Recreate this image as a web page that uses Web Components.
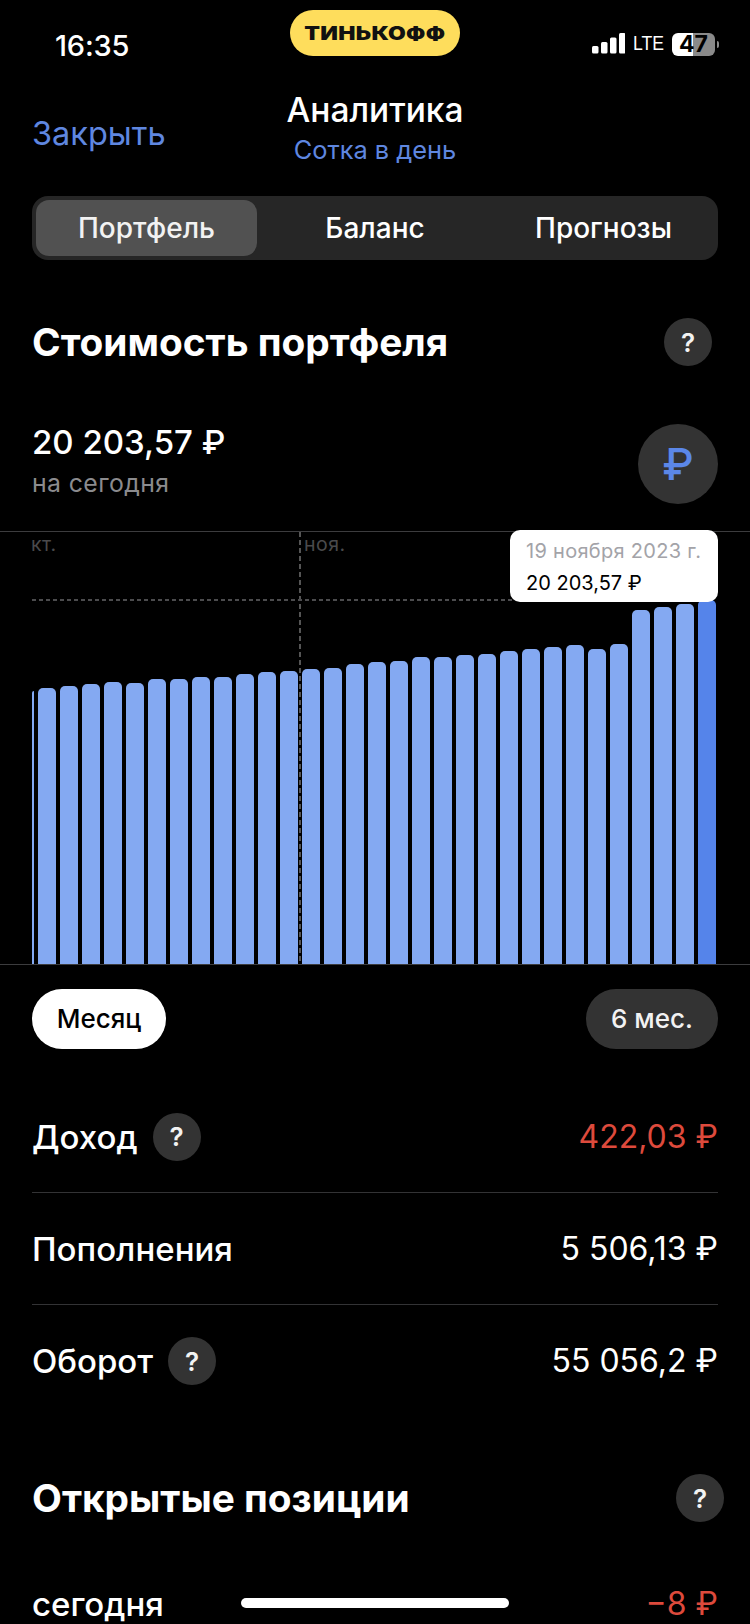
<!DOCTYPE html>
<html lang="ru">
<head>
<meta charset="utf-8">
<title>Аналитика</title>
<style>
  html, body { margin: 0; background: #000; }
  body { width: 750px; height: 1624px; overflow: hidden; position: relative; color: #fff; font-family: Inter, "Noto Sans", sans-serif; }
</style>
</head>
<body>
  <status-bar></status-bar>
  <nav-header></nav-header>
  <segment-tabs></segment-tabs>
  <section-title style="--top: 58px">Стоимость портфеля</section-title>
  <value-summary></value-summary>
  <bar-chart></bar-chart>
  <period-switch></period-switch>
  <stat-list>
    <stat-row label="Доход" value="422,03 ₽" help tone="red"></stat-row>
    <stat-row label="Пополнения" value="5 506,13 ₽"></stat-row>
    <stat-row label="Оборот" value="55 056,2 ₽" help></stat-row>
  </stat-list>
  <section-title style="--top: 57px; --right: 26px">Открытые позиции</section-title>
  <stat-row class="last" label="сегодня" value="−8 ₽" tone="red" plain></stat-row>
  <home-bar></home-bar>

<script>
class HelpDot extends HTMLElement {
  constructor() {
    super();
    this.attachShadow({mode: 'open'});
    this.shadowRoot.innerHTML = `
      <style>
        :host {
          display: flex;
          flex: none;
          width: 48px;
          height: 48px;
          border-radius: 50%;
          background: #333333;
          color: #f2f2f2;
          align-items: center;
          justify-content: center;
          font: 600 26px Inter, sans-serif;
        }
      </style>
      ?
    `;
  }
}
customElements.define('help-dot', HelpDot);

class StatusBar extends HTMLElement {
  constructor() {
    super();
    this.attachShadow({mode: 'open'});
    this.shadowRoot.innerHTML = `
      <style>
        :host {
          display: grid;
          grid-template-columns: 235px 170px 1fr;
          height: 76px;
          padding: 10px 31px 0 55px;
          box-sizing: border-box;
          width: 750px;
        }
        .time {
          font: 500 29px/1 Inter, sans-serif;
          padding-top: 21px;
          letter-spacing: -0.2px;
        }
        .pill {
          height: 46px;
          border-radius: 23px;
          background: #fedd5c;
          color: #111;
          display: flex;
          align-items: center;
          justify-content: center;
          font: 900 18.5px/1 Inter, sans-serif;
        }
        .pill span { display: inline-block; transform: scaleX(1.24); letter-spacing: 0.2px; }
        .right {
          display: flex;
          justify-content: flex-end;
          align-items: flex-start;
          padding-top: 23px;
        }
        svg { display: block; }
        .lte {
          font: 500 20px/21px "Liberation Sans", sans-serif;
          margin-left: 8px;
          width: 39px;
          transform: scaleX(0.88);
          transform-origin: left center;
        }
        .battery {
          position: relative;
          width: 43px;
          height: 23px;
          border-radius: 6px;
          background: linear-gradient(90deg, #fff 0 21px, #8a8a8a 21px);
          color: #000;
          font: 700 23px/23px Inter, sans-serif;
          text-align: center;
        }
        .nub { width: 2px; height: 7px; margin: 8px 0 0 2px; background: #8a8a8a; border-radius: 0 2px 2px 0; }
      </style>
      <div class="time">16:35</div>
      <div class="pill"><span>ТИНЬКОФФ</span></div>
      <div class="right">
        <svg width="33" height="21" viewBox="0 0 33 21" fill="#fff">
          <rect x="0" y="13" width="6.5" height="7.5" rx="1.5"/>
          <rect x="9" y="9" width="6.5" height="11.5" rx="1.5"/>
          <rect x="18" y="4.5" width="6.5" height="16" rx="1.5"/>
          <rect x="27" y="0" width="6.5" height="20.5" rx="1.5"/>
        </svg>
        <div class="lte">LTE</div>
        <div class="battery">47</div>
        <div class="nub"></div>
      </div>
    `;
  }
}
customElements.define('status-bar', StatusBar);

class NavHeader extends HTMLElement {
  constructor() {
    super();
    this.attachShadow({mode: 'open'});
    this.shadowRoot.innerHTML = `
      <style>
        :host {
          display: grid;
          grid-template-columns: 1fr auto 1fr;
          height: 120px;
          padding: 13px 32px 0;
          box-sizing: border-box;
        }
        .close { font: 400 32.5px/40px Inter, sans-serif; color: #5f87e0; padding-top: 25px; }
        .center { text-align: center; }
        .title { font: 500 33.5px/42px Inter, sans-serif; color: #fff; }
        .sub { font: 400 25.4px/34px Inter, sans-serif; color: #5f87e0; margin-top: 2px; }
      </style>
      <div class="close">Закрыть</div>
      <div class="center">
        <div class="title">Аналитика</div>
        <div class="sub">Сотка в день</div>
      </div>
      <div></div>
    `;
  }
}
customElements.define('nav-header', NavHeader);

class SegmentTabs extends HTMLElement {
  constructor() {
    super();
    this.attachShadow({mode: 'open'});
    this.shadowRoot.innerHTML = `
      <style>
        :host {
          display: grid;
          grid-template-columns: 221px 236px 1fr;
          margin: 0 32px;
          height: 64px;
          padding: 4px;
          box-sizing: border-box;
          border-radius: 16px;
          background: #262626;
          font: 500 28px/56px Inter, sans-serif;
          text-align: center;
        }
        .on { background: #515151; border-radius: 13px; color: #f2f2f2; }
      </style>
      <div class="on">Портфель</div>
      <div>Баланс</div>
      <div>Прогнозы</div>
    `;
  }
}
customElements.define('segment-tabs', SegmentTabs);

class SectionTitle extends HTMLElement {
  constructor() {
    super();
    this.attachShadow({mode: 'open'});
    this.shadowRoot.innerHTML = `
      <style>
        :host {
          display: flex;
          align-items: center;
          justify-content: space-between;
          margin-top: var(--top, 60px);
          height: 48px;
          padding: 0 var(--right, 38px) 0 32px;
          font: 700 38.8px/48px Inter, sans-serif;
        }
      </style>
      <slot></slot>
      <help-dot></help-dot>
    `;
  }
}
customElements.define('section-title', SectionTitle);

class ValueSummary extends HTMLElement {
  constructor() {
    super();
    this.attachShadow({mode: 'open'});
    this.shadowRoot.innerHTML = `
      <style>
        :host {
          display: flex;
          align-items: flex-start;
          justify-content: space-between;
          height: 80px;
          margin-top: 58px;
          padding: 0 32px;
        }
        .text { margin-top: -2px; }
        .amount { font: 500 33px/40px Inter, sans-serif; }
        .note { font: 400 24.8px/32px Inter, sans-serif; color: #8b8b8e; margin-top: 5px; letter-spacing: 0.4px; }
        .cur {
          width: 80px;
          height: 80px;
          border-radius: 50%;
          background: #333333;
          color: #5b87e8;
          display: flex;
          align-items: center;
          justify-content: center;
          font: 500 44px/1 Inter, sans-serif;
        }
      </style>
      <div class="text">
        <div class="amount">20 203,57 ₽</div>
        <div class="note">на сегодня</div>
      </div>
      <div class="cur">₽</div>
    `;
  }
}
customElements.define('value-summary', ValueSummary);

// tops of the columns read off the screenshot, baseline is y=964
const BAR_TOPS = [688,686,684,682,683,679,679,677,677,674,672,671,669,668,664,662,661,657,657,655,654,651,649,647,645,649,644,610,607,604,600];

class BarChart extends HTMLElement {
  constructor() {
    super();
    this.attachShadow({mode: 'open'});
    const bars = BAR_TOPS.map((top, i) =>
      `<div class="bar${i === BAR_TOPS.length - 1 ? ' now' : ''}" style="height:${964 - top}px"></div>`).join('');
    this.shadowRoot.innerHTML = `
      <style>
        :host {
          display: block;
          position: relative;
          height: 434px;
          margin-top: 27px;
          box-sizing: border-box;
          border-top: 1px solid #3c3c3e;
          border-bottom: 1px solid #3c3c3e;
        }
        .bars {
          display: flex;
          align-items: flex-end;
          gap: 4px;
          height: 100%;
          padding-left: 32px;
        }
        .bar {
          flex: none;
          width: 18px;
          background: #84a9f2;
          border-radius: 5px 5px 0 0;
        }
        .bar.edge { width: 2px; border-radius: 2px 0 0 0; }
        .bar.now { background: #5584ea; }
        .month { position: absolute; top: 0; font: 400 19.5px/24px Inter, sans-serif; color: #4a4a4c; letter-spacing: 0.5px; }
        .vline {
          position: absolute; left: 299px; top: 0; bottom: 0; width: 2px;
          background: repeating-linear-gradient(180deg, #555 0 5px, transparent 5px 8px);
        }
        .hline {
          position: absolute; left: 32px; width: 480px; top: 67px; height: 2px;
          background: repeating-linear-gradient(90deg, #4c4c4e 0 4px, transparent 4px 7px);
        }
        .tip {
          position: absolute;
          left: 510px;
          top: -2px;
          width: 208px;
          height: 72px;
          box-sizing: border-box;
          padding: 6px 16px;
          border-radius: 10px;
          background: #fff;
          color: #000;
          font: 400 20px/30px Inter, sans-serif;
          white-space: nowrap;
        }
        .tip .date { color: #a3a3a8; margin-bottom: 2px; letter-spacing: 0.3px; }
      </style>
      <div class="bars"><div class="bar edge" style="height:273px"></div>${bars}</div>
      <div class="vline"></div>
      <div class="hline"></div>
      <div class="month" style="left:31px">кт.</div>
      <div class="month" style="left:304px">ноя.</div>
      <div class="tip">
        <div class="date">19 ноября 2023 г.</div>
        <div>20 203,57 ₽</div>
      </div>
    `;
  }
}
customElements.define('bar-chart', BarChart);

class PeriodSwitch extends HTMLElement {
  constructor() {
    super();
    this.attachShadow({mode: 'open'});
    this.shadowRoot.innerHTML = `
      <style>
        :host {
          display: flex;
          justify-content: space-between;
          margin-top: 24px;
          padding: 0 32px;
          font: 500 26px/60px Inter, sans-serif;
        }
        div { height: 60px; border-radius: 30px; text-align: center; }
        .on { width: 134px; background: #fff; color: #000; }
        .off { width: 132px; background: #333333; color: #f2f2f2; }
      </style>
      <div class="on">Месяц</div>
      <div class="off">6 мес.</div>
    `;
  }
}
customElements.define('period-switch', PeriodSwitch);

class StatList extends HTMLElement {
  constructor() {
    super();
    this.attachShadow({mode: 'open'});
    this.shadowRoot.innerHTML = `
      <style>
        :host { display: block; margin: 32px 32px 0; }
        ::slotted(stat-row:not(:last-child)) { border-bottom: 1px solid #333335; }
      </style>
      <slot></slot>
    `;
  }
}
customElements.define('stat-list', StatList);

class StatRow extends HTMLElement {
  constructor() {
    super();
    this.attachShadow({mode: 'open'});
    const help = this.hasAttribute('help') ? '<help-dot></help-dot>' : '';
    this.shadowRoot.innerHTML = `
      <style>
        :host {
          display: flex;
          align-items: center;
          gap: 15px;
          height: 112px;
          box-sizing: border-box;
        }
        :host(.last) { height: 32px; margin: 66px 32px 0; }
        .label { font: 500 33px/32px Inter, sans-serif; }
        .value { margin-left: auto; font: 400 32px/32px Inter, sans-serif; }
        :host([tone="red"]) .value { color: #dd4a3c; }
      </style>
      <span class="label"></span>
      ${help}
      <span class="value"></span>
    `;
    this.shadowRoot.querySelector('.label').textContent = this.getAttribute('label');
    this.shadowRoot.querySelector('.value').textContent = this.getAttribute('value');
  }
}
customElements.define('stat-row', StatRow);

class HomeBar extends HTMLElement {
  constructor() {
    super();
    this.attachShadow({mode: 'open'});
    this.shadowRoot.innerHTML = `
      <style>
        :host {
          position: absolute;
          left: 241px;
          top: 1598px;
          width: 268px;
          height: 10px;
          border-radius: 5px;
          background: #fff;
        }
      </style>
    `;
  }
}
customElements.define('home-bar', HomeBar);
</script>
</body>
</html>
